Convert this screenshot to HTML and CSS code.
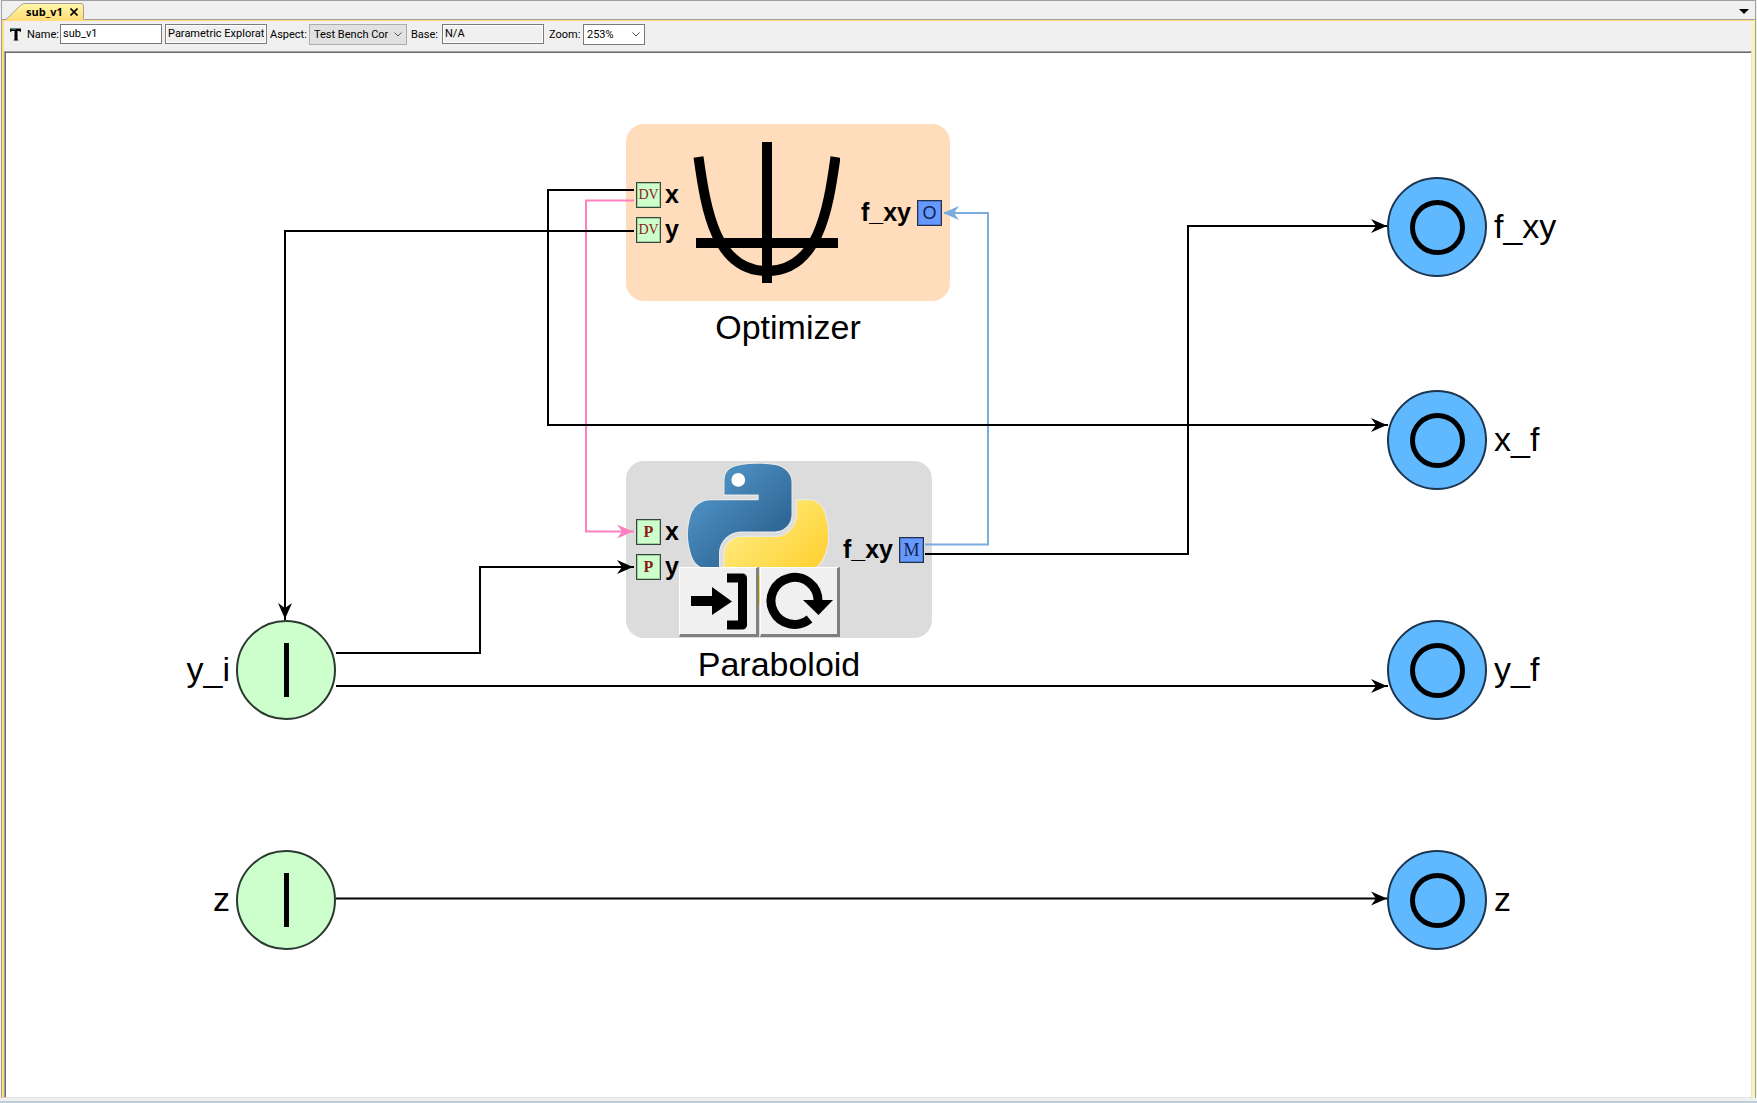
FILE: index.html
```html
<!DOCTYPE html>
<html lang="en">
<head>
<meta charset="utf-8">
<title>sub_v1</title>
<link rel="stylesheet" href="styles.css">
</head>
<body>
<div class="window">
  <header class="tabs">
    <div class="tab">
      <svg class="tab-shape" width="78" height="17" viewBox="0 0 78 17" aria-hidden="true">
        <defs>
          <linearGradient id="tabFill" x1="0" y1="0" x2="0" y2="1">
            <stop offset="0" stop-color="#fff8a8"/>
            <stop offset="1" stop-color="#ffdc78"/>
          </linearGradient>
        </defs>
        <path d="M0 17 L15 2 Q17 0.5 19 0.5 H75 Q77.500 0.500 77.500 3 V17 Z" fill="url(#tabFill)"/>
        <path d="M0 16.500 L15 2 Q17 0.500 19 0.500 H75 Q77.500 0.500 77.500 3 V16" fill="none" stroke="#a0a0a0"/>
      </svg>
      <span class="tab-title">sub_v1</span>
      <button class="tab-close" type="button" aria-label="Close tab">
        <svg width="8" height="8" viewBox="0 0 8 8"><path d="M0.500 0.500 L7.500 7.500 M7.500 0.500 L0.500 7.500" stroke="#000" stroke-width="1.600"/></svg>
      </button>
    </div>
    <button class="tab-list" type="button" aria-label="Open tabs">
      <svg width="10" height="5" viewBox="0 0 10 5"><path d="M0 0 H10 L5 5 Z"/></svg>
    </button>
  </header>

  <main class="pane">
    <form class="toolbar">
      <svg class="type-icon" width="12" height="13" viewBox="0 0 12 13" aria-hidden="true">
        <path d="M0 0.500 H11 V4 L9 3 H7.500 V11 L8.500 12.500 H3.500 L4.500 11 V3 H2 L0 4 Z" fill="#000"/>
        <path d="M1 1 H6" stroke="#3f9aa8"/>
      </svg>
      <label class="lbl-name" for="name">Name:</label>
      <input class="field" id="name" type="text" value="sub_v1">
      <input class="field field-kind" type="text" value="Parametric Exploration" aria-label="Kind" readonly>
      <label class="lbl-aspect" for="aspect">Aspect:</label>
      <span class="picker picker-aspect">
        <select id="aspect"><option>Test Bench Cor</option></select>
        <svg width="8" height="5" viewBox="0 0 8 5"><path d="M0.500 0.500 L4 4 L7.500 0.500"/></svg>
      </span>
      <label class="lbl-base" for="base">Base:</label>
      <input class="field field-base" id="base" type="text" value="N/A" readonly>
      <label class="lbl-zoom" for="zoom">Zoom:</label>
      <span class="picker picker-zoom">
        <select id="zoom"><option>253%</option></select>
        <svg width="8" height="5" viewBox="0 0 8 5"><path d="M0.500 0.500 L4 4 L7.500 0.500"/></svg>
      </span>
    </form>

    <div class="well">
      <div class="canvas">
        <section class="block optimizer">
          <div class="block-body">
            <div class="ports">
              <div class="port"><span class="pin pin-dv">DV</span><span class="port-name">x</span></div>
              <div class="port"><span class="pin pin-dv">DV</span><span class="port-name">y</span></div>
            </div>
            <svg class="parabola" width="147" height="144" viewBox="693 140 147 144" aria-hidden="true">
              <path d="M698.500 156 C706 210 716 270 767 270 C818 270 828 210 835.500 156" fill="none" stroke="#000" stroke-width="10"/>
              <path d="M696 237 H838 V247 H696 Z M762 141 H772 V282 H762 Z"/>
            </svg>
            <div class="ports">
              <div class="port port-out"><span class="port-name">f_xy</span><span class="pin pin-o">O</span></div>
            </div>
          </div>
          <h2 class="caption">Optimizer</h2>
        </section>

        <section class="block paraboloid">
          <div class="block-body">
            <div class="ports">
              <div class="port"><span class="pin pin-p">P</span><span class="port-name">x</span></div>
              <div class="port"><span class="pin pin-p">P</span><span class="port-name">y</span></div>
            </div>
            <div class="component">
              <svg class="python" width="142" height="144" viewBox="0 0 111 113" aria-hidden="true">
                <defs>
                  <linearGradient id="pyBlue" x1="0" y1="0" x2="0.700" y2="0.750">
                    <stop offset="0" stop-color="#5a9fd4"/>
                    <stop offset="1" stop-color="#306998"/>
                  </linearGradient>
                  <linearGradient id="pyYellow" x1="0.250" y1="0.200" x2="0.700" y2="0.700">
                    <stop offset="0" stop-color="#ffe873"/>
                    <stop offset="1" stop-color="#ffd43b"/>
                  </linearGradient>
                </defs>
                <g stroke="#e8e8e8" stroke-width="1">
                <path fill="url(#pyBlue)" d="M54.900 0 C50.300 0 46 0.400 42.100 1.100 C30.800 3.100 28.700 7.300 28.700 15 V25.300 H55.500 V28.700 H18.600 C10.800 28.700 4 33.300 1.900 42.300 C-0.600 52.500 -0.700 58.800 1.900 69.500 C3.800 77.400 8.300 83.100 16.100 83.100 H25.400 V70.800 C25.400 62 33 54.200 42.100 54.200 H68.900 C76.300 54.200 82.300 48.100 82.300 40.600 V15 C82.300 7.800 76.200 2.300 68.900 1.100 C64.300 0.300 59.500 0 54.900 0 Z"/>
                <path fill="url(#pyYellow)" d="M85.600 28.700 V40.600 C85.600 49.800 77.800 57.600 68.900 57.600 H42.100 C34.800 57.600 28.700 63.800 28.700 71.200 V96.700 C28.700 104 35 108.300 42.100 110.300 C50.600 112.800 58.700 113.300 68.900 110.300 C75.600 108.400 82.300 104.500 82.300 96.700 V86.500 H55.500 V83.100 H95.700 C103.500 83.100 106.400 77.700 109.100 69.500 C111.900 61.100 111.800 53 109.100 42.300 C107.200 34.500 103.500 28.700 95.700 28.700 Z"/>
                </g>
                <circle cx="40" cy="13.300" r="5.400" fill="#fff"/>
              </svg>
              <div class="actions">
                <button type="button" aria-label="Open component">
                  <svg width="80" height="70" viewBox="0 0 80 70">
                    <path d="M12 29 H33 V20 L53 34.500 L33 48 V39 H12 Z"/>
                    <path d="M48 11 H63.500 V58 H48" fill="none" stroke="#000" stroke-width="9" stroke-linejoin="round"/>
                  </svg>
                </button>
                <button type="button" aria-label="Reload component">
                  <svg width="80" height="70" viewBox="0 0 80 70">
                    <path d="M49.500 52 A23.500 23.500 0 1 1 58 34" fill="none" stroke="#000" stroke-width="9"/>
                    <path d="M43 33 H73 L58.500 48 Z"/>
                  </svg>
                </button>
              </div>
            </div>
            <div class="ports">
              <div class="port port-out"><span class="port-name">f_xy</span><span class="pin pin-m">M</span></div>
            </div>
          </div>
          <h2 class="caption">Paraboloid</h2>
        </section>

        <svg class="wires" width="1500" height="960" viewBox="6 53 1500 960" aria-hidden="true">
          <g class="wire wire-blue">
            <path d="M925 544.500 H988 V213 H944"/>
            <path class="tip" d="M943 213 L959 206 L954 213 L959 220 Z"/>
          </g>
          <g class="wire wire-pink">
            <path d="M634 200.500 H586 V531.500 H634"/>
            <path class="tip" d="M633 531.500 L617 524.500 L622 531.500 L617 538.500 Z"/>
          </g>
          <g class="wire">
            <path d="M634 190 H548 V425 H1388"/>
            <path class="tip" d="M1387 425 L1371 418 L1376 425 L1371 432 Z"/>
            <path d="M634 231 H285 V620"/>
            <path class="tip" d="M285 619 L278 603 L285 608 L292 603 Z"/>
            <path d="M925 554 H1188 V226 H1388"/>
            <path class="tip" d="M1387 226 L1371 219 L1376 226 L1371 233 Z"/>
            <path d="M336 653 H480 V567 H634"/>
            <path class="tip" d="M633 567 L617 560 L622 567 L617 574 Z"/>
            <path d="M336 686 H1388"/>
            <path class="tip" d="M1387 686 L1371 679 L1376 686 L1371 693 Z"/>
            <path d="M336 898.500 H1388"/>
            <path class="tip" d="M1387 898.500 L1371 891.500 L1376 898.500 L1371 905.500 Z"/>
          </g>
        </svg>

        <div class="terminal in in-yi"><span class="name">y_i</span><span class="disc"></span></div>
        <div class="terminal in in-z"><span class="name">z</span><span class="disc"></span></div>
        <div class="terminal out out-fxy"><span class="disc"></span><span class="name">f_xy</span></div>
        <div class="terminal out out-xf"><span class="disc"></span><span class="name">x_f</span></div>
        <div class="terminal out out-yf"><span class="disc"></span><span class="name">y_f</span></div>
        <div class="terminal out out-z"><span class="disc"></span><span class="name">z</span></div>
      </div>
    </div>
  </main>
</div>
<footer class="status"></footer>
</body>
</html>
```
FILE: styles.css
```css
*,
*::before { box-sizing: border-box; }

body {
  margin: 0;
  height: 100vh;
  display: flex;
  flex-direction: column;
  overflow: hidden;
  background: #f0f0f0;
  color: #000;
  font-family: "Liberation Sans", Arial, sans-serif;
  font-size: 11px;
}

button {
  margin: 0;
  padding: 0;
  border: 0;
  background: none;
}

svg { display: block; }

/* Window frame and document tabs */
.window {
  flex: 1;
  min-height: 0;
  display: flex;
  flex-direction: column;
  margin: 0 1px;
  border: solid #a0a0a0;
  border-width: 1px 1px 0;
}

.tabs {
  display: flex;
  justify-content: space-between;
  height: 19px;
  padding: 2px 6px 0 4px;
  border-bottom: 1px solid #a0a0a0;
}

.tab {
  position: relative;
  display: flex;
  align-items: center;
  gap: 7px;
  width: 78px;
  height: 17px;
  padding-left: 20px;
}

.tab-shape {
  position: absolute;
  left: 0;
  top: 0;
}

.tab-title {
  position: relative;
  font: bold 11px/16px "Open Sans", sans-serif;
}

.tab-close { position: relative; }

.tab-list { align-self: center; }

.pane {
  flex: 1;
  min-height: 0;
  display: flex;
  flex-direction: column;
  border: solid #ffdc78;
  border-width: 1px 2px 0;
  border-right-color: #fff791;
}

/* Property bar */
.toolbar {
  display: flex;
  align-items: center;
  height: 30px;
  padding: 0 0 4px 6px;
  font-family: Roboto, "Liberation Sans", sans-serif;
}

.type-icon { margin-right: 5px; }

.toolbar label { line-height: 14px; padding-top: 2px; }

.lbl-name { width: 33px; }
.lbl-aspect { width: 39px; margin-left: 3px; }
.lbl-base { width: 31px; margin-left: 4px; }
.lbl-zoom { width: 34px; margin-left: 5px; }

.field {
  width: 102px;
  height: 20px;
  padding: 0 2px 1px;
  border: 1px solid #7a7a7a;
  outline: 0;
  background: #fff;
  color: #000;
  font: inherit;
}

.field[readonly] {
  background: #f0f0f0;
  box-shadow: inset 0 0 0 1px #fff;
}

.field-kind { margin-left: 3px; }

.picker {
  position: relative;
  height: 21px;
}

.picker select {
  appearance: none;
  width: 100%;
  height: 100%;
  padding: 0 18px 0 4px;
  border: 1px solid #adadad;
  border-radius: 0;
  background: #e1e1e1;
  color: #000;
  font: inherit;
}

.picker svg {
  position: absolute;
  right: 5px;
  top: 8px;
  fill: none;
  stroke: #555;
  pointer-events: none;
}

.picker-aspect { width: 98px; }
.picker-zoom { width: 62px; }

.picker-zoom select {
  padding-left: 3px;
  border-color: #7a7a7a;
  background: #fff;
}

/* Drawing area */
.well {
  flex: 1;
  min-height: 0;
  display: flex;
  margin-right: 1px;
  border: 1px solid #a0a0a0;
  border-right-color: #e3e3e3;
  border-bottom-color: #e3e3e3;
}

.canvas {
  position: relative;
  flex: 1;
  overflow: hidden;
  border: solid #696969;
  border-width: 1px 0 0 1px;
  background: #fff;
}

.wires {
  position: absolute;
  left: 0;
  top: 0;
  pointer-events: none;
}

.wire {
  fill: none;
  stroke: #000;
  stroke-width: 2;
}

.wire .tip { fill: #000; stroke: none; }
.wire-blue { stroke: #7aacdf; }
.wire-blue .tip { fill: #7aacdf; }
.wire-pink { stroke: #ff80c0; }
.wire-pink .tip { fill: #ff80c0; }

.block { position: absolute; }
.optimizer { left: 620px; top: 71px; width: 324px; }
.paraboloid { left: 620px; top: 408px; width: 306px; }

.block-body {
  display: flex;
  align-items: center;
  height: 177px;
  padding: 0 8px 0 10px;
  border-radius: 18px;
  background: #ffdcbc;
}

.paraboloid .block-body { background: #dcdcdc; }

.parabola { margin-left: 14px; }

.ports {
  display: grid;
  gap: 9px;
}

.ports:last-child { margin-left: auto; }

.port {
  display: flex;
  align-items: center;
  gap: 4px;
  font-size: 25px;
  font-weight: bold;
  line-height: 26px;
}

.port-out { gap: 6px; }

.port-name {
  height: 26px;
  line-height: 24px;
}

.pin {
  width: 25px;
  height: 26px;
  border: 1px solid #2f4a3a;
  outline: 1px solid #0003;
  outline-offset: -2px;
  background: #ccffcc;
  color: #8c1c1c;
  text-align: center;
  line-height: 24px;
  font-family: "Liberation Serif", serif;
}

.pin-dv { font-size: 14px; font-weight: normal; }
.pin-p { font-size: 16px; }
.pin-o, .pin-m { background: #6699ff; border-color: #23304f; color: #14224a; font-weight: normal; }
.pin-o { font-family: "Liberation Sans", sans-serif; font-size: 18px; }
.pin-m { font-size: 18px; }

.component {
  position: relative;
  align-self: stretch;
  width: 161px;
  padding: 2px 0 0 8px;
}

.actions {
  position: absolute;
  left: 0;
  bottom: 1px;
  display: flex;
  gap: 1px;
}

.actions button {
  width: 80px;
  height: 70px;
  border: solid;
  border-width: 1px 3px 3px 1px;
  border-color: #fff #808080 #808080 #fff;
  background: #f0f0f0;
}

.actions svg { margin: -1px; }

.caption {
  margin: 6px 0 0;
  font-size: 34px;
  font-weight: normal;
  line-height: 40px;
  text-align: center;
}

.terminal {
  position: absolute;
  display: flex;
  align-items: center;
  height: 100px;
  font-size: 34px;
}

.terminal .name { padding-bottom: 2px; }

.terminal .disc {
  display: flex;
  align-items: center;
  justify-content: center;
  width: 100px;
  height: 100px;
  border: 2px solid #2b3a30;
  border-radius: 50%;
  background: #ccffcc;
}

.in { left: 174px; gap: 6px; }
.in .name { width: 50px; text-align: right; }

.in .disc::before {
  content: "";
  width: 5px;
  height: 54px;
  background: #000;
}

.out { left: 1381px; gap: 7px; }

.out .disc {
  border-color: #1c3650;
  background: #60b8ff;
}

.out .disc::before {
  content: "";
  width: 55px;
  height: 55px;
  border: 5px solid #000;
  border-radius: 50%;
}

.in-yi { top: 567px; }
.in-z { top: 797px; }
.out-fxy { top: 124px; }
.out-xf { top: 337px; }
.out-yf { top: 567px; }
.out-z { top: 797px; }

.status {
  height: 5px;
  border-bottom: 2px solid #bfcddb;
}
```
